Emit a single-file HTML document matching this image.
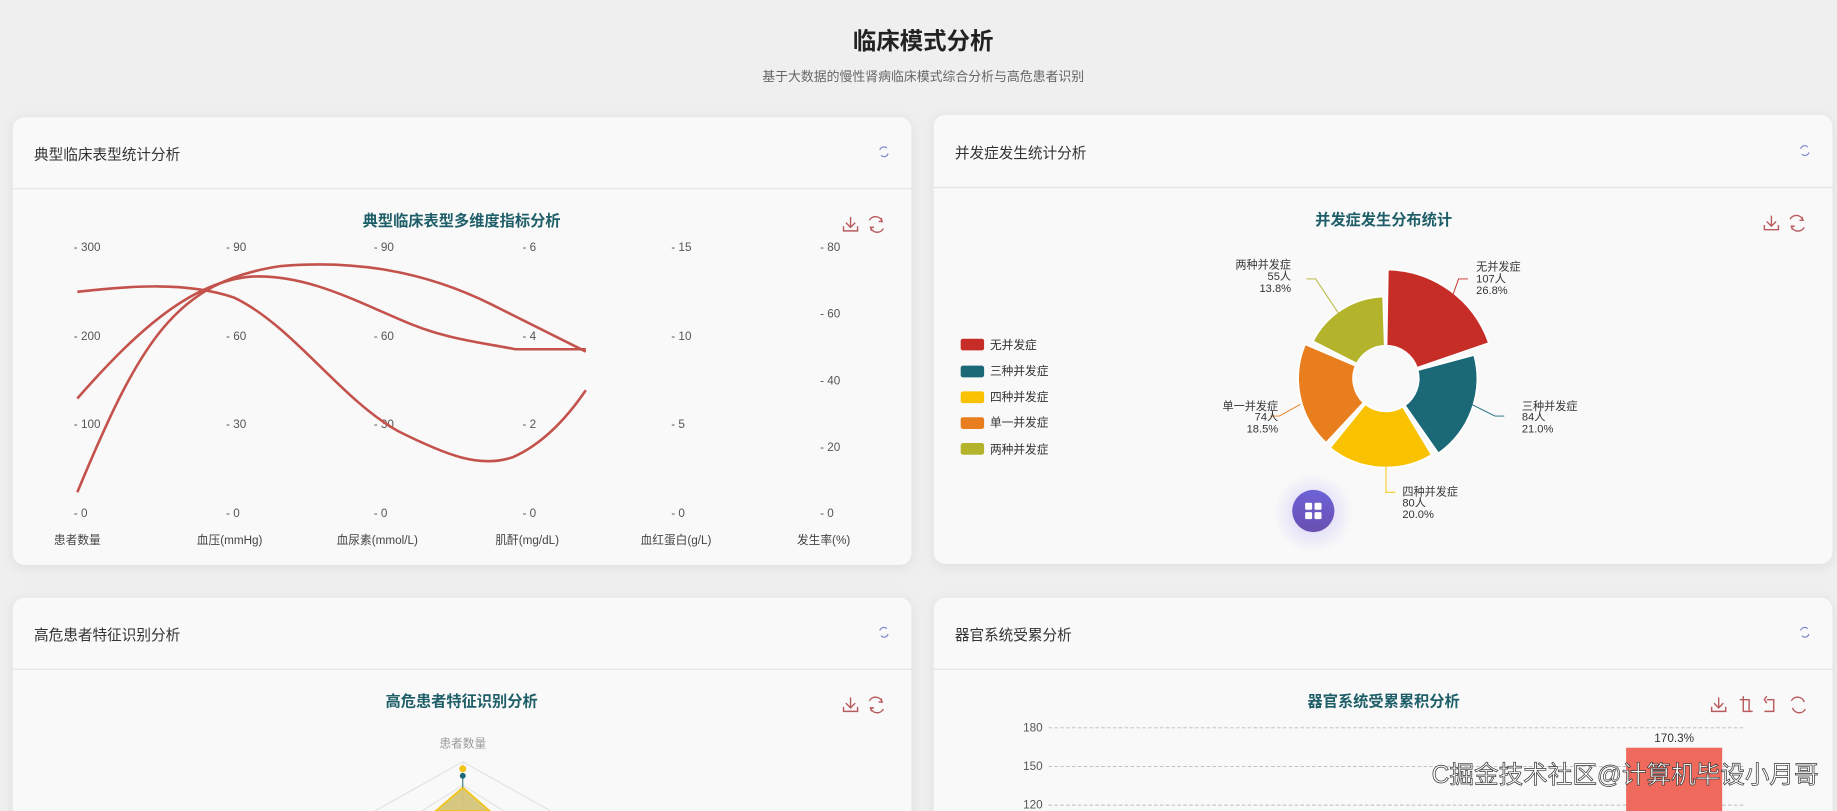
<!DOCTYPE html>
<html><head><meta charset="utf-8">
<style>
html,body{margin:0;padding:0;background:#efeff0;}
svg{display:block}
text{font-family:"Liberation Sans","Noto Sans CJK SC",sans-serif;}
</style></head>
<body>
<svg width="1837" height="811" viewBox="0 0 1568 692" preserveAspectRatio="none" xmlns="http://www.w3.org/2000/svg">
<defs>
<filter id="sh" x="-5%" y="-5%" width="110%" height="115%"><feDropShadow dx="0" dy="2" stdDeviation="5" flood-color="#000" flood-opacity="0.08"/></filter>
<radialGradient id="glow"><stop offset="0" stop-color="#8a7cf0" stop-opacity="0.35"/><stop offset="1" stop-color="#8a7cf0" stop-opacity="0"/></radialGradient>
<linearGradient id="fab" x1="0" y1="0" x2="0" y2="1"><stop offset="0" stop-color="#6c63d8"/><stop offset="1" stop-color="#6a4fb0"/></linearGradient>
</defs>
<rect width="1568" height="692" fill="#efeff0"/>
<text x="788" y="42" text-anchor="middle" font-size="20" font-weight="bold" fill="#222">临床模式分析</text>
<text x="788" y="69" text-anchor="middle" font-size="11" fill="#666">基于大数据的慢性肾病临床模式综合分析与高危患者识别</text>

<g filter="url(#sh)">
<rect x="11" y="100" width="767" height="382" rx="10" fill="#f9f9f9"/>
<rect x="797" y="98" width="767" height="383" rx="10" fill="#f9f9f9"/>
<rect x="11" y="510" width="767" height="200" rx="10" fill="#f9f9f9"/>
<rect x="797" y="510" width="767" height="200" rx="10" fill="#f9f9f9"/>
</g>
<line x1="11" y1="161" x2="778" y2="161" stroke="#e3e3e5"/>
<line x1="797" y1="160" x2="1564" y2="160" stroke="#e3e3e5"/>
<line x1="11" y1="571" x2="778" y2="571" stroke="#e3e3e5"/>
<line x1="797" y1="571" x2="1564" y2="571" stroke="#e3e3e5"/>

<g font-size="12.5" fill="#333">
<text x="29" y="136">典型临床表型统计分析</text>
<text x="815" y="135">并发症发生统计分析</text>
<text x="29" y="546">高危患者特征识别分析</text>
<text x="815" y="546">器官系统受累分析</text>
</g>
<g fill="none" stroke="#7a86c8" stroke-width="1">
<path d="M751 128 a3.5 3.5 0 0 1 6 -1.5 M758 131 a3.5 3.5 0 0 1 -6 1.5"/>
<path d="M1537 127 a3.5 3.5 0 0 1 6 -1.5 M1544 130 a3.5 3.5 0 0 1 -6 1.5"/>
<path d="M751 538 a3.5 3.5 0 0 1 6 -1.5 M758 541 a3.5 3.5 0 0 1 -6 1.5"/>
<path d="M1537 538 a3.5 3.5 0 0 1 6 -1.5 M1544 541 a3.5 3.5 0 0 1 -6 1.5"/>
</g>

<g font-size="13" font-weight="bold" fill="#1e5e68" text-anchor="middle">
<text x="394" y="193">典型临床表型多维度指标分析</text>
<text x="1181" y="192">并发症发生分布统计</text>
<text x="394" y="603">高危患者特征识别分析</text>
<text x="1181" y="603">器官系统受累累积分析</text>
</g>

<g fill="none" stroke="#b85a5e" stroke-width="1.2">
<path d="M726 185 v9 M722 190 l4 4 4 -4 M720 193 v4 h12 v-4"/>
<path d="M742 188 a6 6 0 0 1 11 1 M754 195 a6 6 0 0 1 -11 -1 M752 186 l1 3 -3 0 M744 197 l-1 -3 3 0"/>
<path d="M1512 184 v9 M1508 189 l4 4 4 -4 M1506 192 v4 h12 v-4"/>
<path d="M1528 187 a6 6 0 0 1 11 1 M1540 194 a6 6 0 0 1 -11 -1 M1538 185 l1 3 -3 0 M1530 196 l-1 -3 3 0"/>
<path d="M726 595 v9 M722 600 l4 4 4 -4 M720 603 v4 h12 v-4"/>
<path d="M742 598 a6 6 0 0 1 11 1 M754 605 a6 6 0 0 1 -11 -1 M752 596 l1 3 -3 0 M744 607 l-1 -3 3 0"/>
<path d="M1467 595 v9 M1463 600 l4 4 4 -4 M1461 603 v4 h12 v-4"/>
<path d="M1485 597 h8 v10 M1488 597 v-3 M1488 597 v10 h8"/>
<path d="M1506 607 h8 v-10 h-6 M1508 594 l-2 3 2 3"/>
<path d="M1529 598 a6 6 0 0 1 11 1 M1541 605 a6 6 0 0 1 -11 -1"/>
</g>

<g font-size="10" fill="#555">
<text x="63" y="214">- 300</text><text x="63" y="290">- 200</text><text x="63" y="365">- 100</text><text x="63" y="441">- 0</text>
<text x="193" y="214">- 90</text><text x="193" y="290">- 60</text><text x="193" y="365">- 30</text><text x="193" y="441">- 0</text>
<text x="319" y="214">- 90</text><text x="319" y="290">- 60</text><text x="319" y="365">- 30</text><text x="319" y="441">- 0</text>
<text x="446" y="214">- 6</text><text x="446" y="290">- 4</text><text x="446" y="365">- 2</text><text x="446" y="441">- 0</text>
<text x="573" y="214">- 15</text><text x="573" y="290">- 10</text><text x="573" y="365">- 5</text><text x="573" y="441">- 0</text>
<text x="700" y="214">- 80</text><text x="700" y="271">- 60</text><text x="700" y="328">- 40</text><text x="700" y="385">- 20</text><text x="700" y="441">- 0</text>
</g>
<g font-size="10" fill="#444" text-anchor="middle">
<text x="66" y="464">患者数量</text><text x="196" y="464">血压(mmHg)</text><text x="322" y="464">血尿素(mmol/L)</text>
<text x="450" y="464">肌酐(mg/dL)</text><text x="577" y="464">血红蛋白(g/L)</text><text x="703" y="464">发生率(%)</text>
</g>
<g fill="none" stroke="#c4524c" stroke-width="2.2">
<path d="M66 249 C110 244 160 240 200 254 C250 278 290 340 340 368 C380 388 410 400 438 390 C465 378 485 355 500 333"/>
<path d="M66 340 C110 290 160 240 215 236 C260 234 300 255 340 272 C380 290 410 292 440 298 L500 298"/>
<path d="M66 420 C120 290 150 240 240 227 C300 222 360 230 420 260 C460 280 480 290 500 300"/>
</g>

<g font-size="10" fill="#333">
<rect x="820" y="289" width="20" height="10" rx="2" fill="#c62d26"/><text x="845" y="298">无并发症</text>
<rect x="820" y="312" width="20" height="10" rx="2" fill="#1b6977"/><text x="845" y="320">三种并发症</text>
<rect x="820" y="334" width="20" height="10" rx="2" fill="#f8c200"/><text x="845" y="342">四种并发症</text>
<rect x="820" y="356" width="20" height="10" rx="2" fill="#e97e1e"/><text x="845" y="364">单一并发症</text>
<rect x="820" y="378" width="20" height="10" rx="2" fill="#b3b42c"/><text x="845" y="387">两种并发症</text>
</g>
<g id="pie" stroke="#fff" stroke-width="1.5" stroke-linejoin="round"></g>
<g fill="none" stroke-width="0.8">
<path d="M1240 252 l5 -14 h8" stroke="#c62d26"/>
<path d="M1256 345 l20 10 h8" stroke="#1b6977"/>
<path d="M1183 398 v22 h8" stroke="#f8c200"/>
<path d="M1110 345 l-18 10 h-8" stroke="#e97e1e"/>
<path d="M1143 268 l-20 -30 h-8" stroke="#b3b42c"/>
</g>
<g font-size="9.5" fill="#333">
<text x="1260" y="231">无并发症</text><text x="1260" y="241">107人</text><text x="1260" y="251">26.8%</text>
<text x="1299" y="350">三种并发症</text><text x="1299" y="359">84人</text><text x="1299" y="369">21.0%</text>
<text x="1197" y="423">四种并发症</text><text x="1197" y="432">80人</text><text x="1197" y="442">20.0%</text>
<text x="1091" y="350" text-anchor="end">单一并发症</text><text x="1091" y="359" text-anchor="end">74人</text><text x="1091" y="369" text-anchor="end">18.5%</text>
<text x="1102" y="229" text-anchor="end">两种并发症</text><text x="1102" y="239" text-anchor="end">55人</text><text x="1102" y="249" text-anchor="end">13.8%</text>
</g>
<circle cx="1121" cy="438" r="34" fill="url(#glow)"/>
<circle cx="1121" cy="436" r="18" fill="url(#fab)"/>
<g fill="#fff"><rect x="1114" y="429" width="6" height="6" rx="1"/><rect x="1122" y="429" width="6" height="6" rx="1"/><rect x="1114" y="437" width="6" height="6" rx="1"/><rect x="1122" y="437" width="6" height="6" rx="1"/></g>

<text x="395" y="638" text-anchor="middle" font-size="10" fill="#999">患者数量</text>
<g stroke="#ddd" fill="none" stroke-width="0.8"><path d="M395 650 L470 692 M395 650 L320 692 M395 650 V692 M395 670 L430 692 M395 670 L360 692"/></g>
<polygon points="395,672 418,692 372,692" fill="#c7b34d" fill-opacity="0.7" stroke="#f2c418" stroke-width="1.5"/>
<circle cx="395" cy="656" r="3" fill="#f2c418"/><circle cx="395" cy="662" r="2.5" fill="#1b6977"/>
<line x1="395" y1="662" x2="395" y2="672" stroke="#1b6977" stroke-width="0.8"/>

<g stroke="#bbb" stroke-dasharray="3,2" stroke-width="0.8"><line x1="895" y1="621" x2="1490" y2="621"/><line x1="895" y1="654" x2="1490" y2="654"/><line x1="895" y1="687" x2="1490" y2="687"/></g>
<g font-size="10" fill="#555" text-anchor="end"><text x="890" y="624">180</text><text x="890" y="657">150</text><text x="890" y="690">120</text></g>
<rect x="1388" y="638" width="82" height="54" fill="#ef6a5d"/>
<text x="1429" y="633" text-anchor="middle" font-size="10" fill="#333">170.3%</text>
<text x="1222" y="668" font-size="21" fill="#fff" stroke="#333" stroke-width="0.6">C掘金技术社区@计算机毕设小月哥</text>

<script>
var g=document.getElementById('pie'),cx=1183,cy=323,ri=28;
var s=[[1,71,93,'#c62d26'],[75,145,78,'#1b6977'],[149,219,76,'#f8c200'],[223,293,75,'#e97e1e'],[297,358,70,'#b3b42c']];
function p(a,r){a=(a-90)*Math.PI/180;return (cx+r*Math.cos(a)).toFixed(1)+' '+(cy+r*Math.sin(a)).toFixed(1);}
s.forEach(function(d){var l=(d[1]-d[0])>180?1:0;var e=document.createElementNS('http://www.w3.org/2000/svg','path');
e.setAttribute('d','M'+p(d[0],ri)+' L'+p(d[0],d[2])+' A'+d[2]+' '+d[2]+' 0 '+l+' 1 '+p(d[1],d[2])+' L'+p(d[1],ri)+' A'+ri+' '+ri+' 0 '+l+' 0 '+p(d[0],ri)+'Z');
e.setAttribute('fill',d[3]);g.appendChild(e);});
</script>
</svg>
</body></html>
